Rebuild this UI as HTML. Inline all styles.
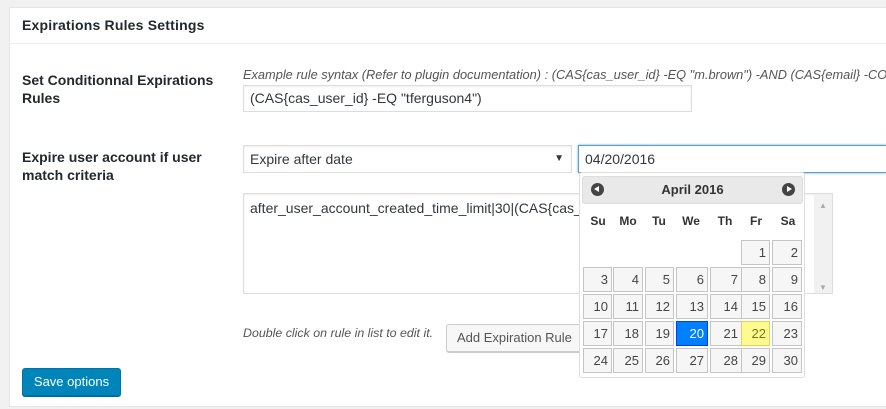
<!DOCTYPE html><html><head><style>
html,body{margin:0;width:886px;height:409px;overflow:hidden}
body{background:#f1f1f1;font-family:"Liberation Sans",sans-serif;color:#23282d;position:relative}
.a{position:absolute}
.panel{left:9px;top:7px;width:877px;height:398px;background:#fff;border:1px solid #e5e5e5;border-right:none}
.inp{background:#fff;border:1px solid #ddd;box-shadow:inset 0 1px 2px rgba(0,0,0,.07);font-size:14px;color:#32373c;box-sizing:border-box;padding-left:6px;line-height:25px}
.lbl{font-size:14px;font-weight:bold;line-height:18px;color:#23282d}
.c{position:absolute;width:27px;height:23px;border:1px solid #c5c5c5;background:#f6f6f6;color:#454545;font-size:13px;text-align:right;box-sizing:content-box;line-height:23px}
.c span{padding-right:3px}
.dn{position:absolute;font-size:12px;font-weight:bold;color:#333;width:30px;text-align:center}
</style></head><body>
<div class="a panel"></div>
<div class="a" style="left:10px;top:43px;width:876px;border-top:1px solid #eee"></div>
<div class="a" style="left:22px;top:17px;font-size:14px;font-weight:bold;letter-spacing:.2px">Expirations Rules Settings</div>
<div class="a lbl" style="left:22px;top:71px">Set Conditionnal Expirations<br>Rules</div>
<div class="a lbl" style="left:22px;top:148px">Expire user account if user<br>match criteria</div>
<div class="a" style="left:243px;top:67px;width:643px;overflow:hidden;font-size:12.8px;font-style:italic;color:#555;white-space:nowrap">Example rule syntax (Refer to plugin documentation) : (CAS{cas_user_id} -EQ "m.brown") -AND (CAS{email} -CONTAINS</div>
<div class="a inp" style="left:243px;top:85px;width:449px;height:27px">(CAS{cas_user_id} -EQ "tferguson4")</div>
<div class="a inp" style="left:243px;top:145px;width:329px;height:28px;line-height:26px">Expire after date<span style="position:absolute;right:7px;font-size:10px">▼</span></div>
<div class="a inp" style="left:578px;top:145px;width:308px;height:28px;line-height:26px;border-color:#5b9dd9;border-right:none;box-shadow:0 0 2px rgba(30,140,190,.8)">04/20/2016</div>
<div class="a inp" style="left:243px;top:193px;width:590px;height:101px;line-height:20px;padding-top:4px;overflow:hidden;white-space:nowrap">after_user_account_created_time_limit|30|(CAS{cas_user_id}
<div class="a" style="right:0;top:0;width:18px;height:99px;background:#f1f1f1"><span class="a" style="left:5px;top:2px;font-size:8px;color:#aaa">▲</span><span class="a" style="left:5px;top:84px;font-size:8px;color:#aaa">▼</span></div></div>
<div class="a" style="left:243px;top:326px;font-size:12.4px;font-style:italic;color:#555">Double click on rule in list to edit it.</div>
<div class="a" style="left:446px;top:324px;width:140px;height:28px;box-sizing:border-box;border:1px solid #ccc;background:#f7f7f7;border-radius:3px;box-shadow:0 1px 0 #ccc;font-size:13px;color:#555;line-height:26px;padding-left:10px;overflow:hidden;white-space:nowrap">Add Expiration Rule</div>
<div class="a" style="left:22px;top:368px;width:99px;height:28px;box-sizing:border-box;background:#0085ba;border:1px solid #0073aa;border-radius:3px;box-shadow:0 1px 0 #006799;color:#fff;font-size:13px;line-height:26px;text-align:center">Save options</div>
<div class="a" style="left:579px;top:172px;width:226px;height:206px;background:#fff;border:1px solid #ddd;border-radius:3px;box-sizing:border-box"></div>
<div class="a" style="left:582px;top:176px;width:221px;height:28px;background:#e9e9e9;border:1px solid #ddd;box-sizing:border-box;border-radius:3px;text-align:center;font-weight:bold;font-size:13px;color:#333;line-height:26px">April 2016
<span class="a" style="left:8px;top:6px;width:13px;height:13px;border-radius:50%;background:#444"><span class="a" style="left:3px;top:3px;border-right:5px solid #fff;border-top:3.5px solid transparent;border-bottom:3.5px solid transparent"></span></span>
<span class="a" style="right:7px;top:6px;width:13px;height:13px;border-radius:50%;background:#444"><span class="a" style="left:5px;top:3px;border-left:5px solid #fff;border-top:3.5px solid transparent;border-bottom:3.5px solid transparent"></span></span></div>
<div class="dn" style="left:583px;top:214px">Su</div><div class="dn" style="left:613px;top:214px">Mo</div><div class="dn" style="left:644px;top:214px">Tu</div><div class="dn" style="left:676px;top:214px">We</div><div class="dn" style="left:710px;top:214px">Th</div><div class="dn" style="left:741px;top:214px">Fr</div><div class="dn" style="left:773px;top:214px">Sa</div>
<div id="g"></div>
<script>
var xs=[583,613,645,676,710,741,772],ws=[27,28,27,30,30,27,28],ys=[240,267,294,321,348],h='';
for(var d=1;d<=30;d++){var i=d+4,r=Math.floor(i/7),c=i%7;var st='left:'+xs[c]+'px;top:'+ys[r]+'px;width:'+ws[c]+'px;';
if(d==20)st+='background:#007fff;border-color:#003eff;color:#fff;';if(d==22)st+='background:#fffa90;border-color:#dad55e;color:#777620;';
h+='<div class="c" style="'+st+'"><span>'+d+'</span></div>';}
document.getElementById('g').innerHTML=h;
</script>
</body></html>
